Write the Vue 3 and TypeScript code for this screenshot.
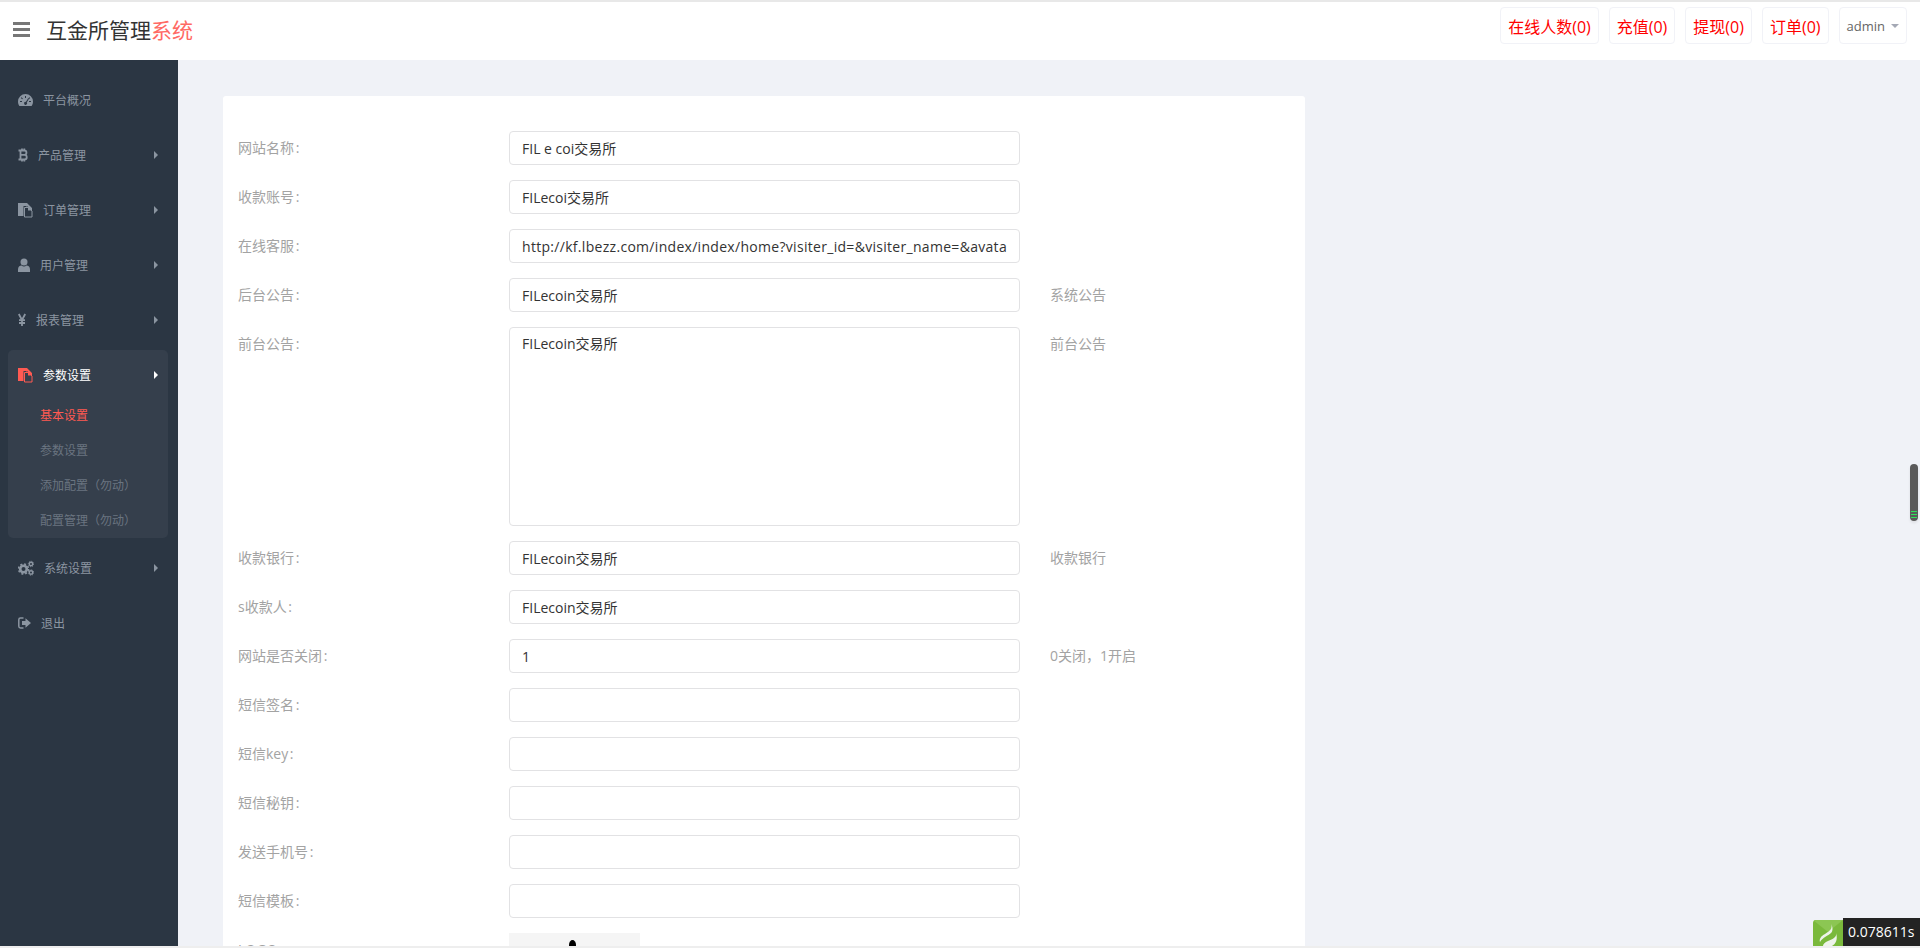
<script setup lang="ts">
interface NavItem {
  label: string;
  icon: string;
  arrow?: boolean;
  active?: boolean;
  children?: { label: string; current?: boolean }[];
}

interface FormRow {
  label: string;
  value: string;
  help?: string;
  multiline?: boolean;
  url?: boolean;
}

const navItems: NavItem[] = [
  { label: '平台概况', icon: 'dashboard' },
  { label: '产品管理', icon: 'bitcoin', arrow: true },
  { label: '订单管理', icon: 'files', arrow: true },
  { label: '用户管理', icon: 'user', arrow: true },
  { label: '报表管理', icon: 'yen', arrow: true },
  {
    label: '参数设置',
    icon: 'files',
    arrow: true,
    active: true,
    children: [
      { label: '基本设置', current: true },
      { label: '参数设置' },
      { label: '添加配置（勿动）' },
      { label: '配置管理（勿动）' },
    ],
  },
  { label: '系统设置', icon: 'gears', arrow: true },
  { label: '退出', icon: 'signout' },
];

const iconWidth: Record<string, number> = {
  dashboard: 15,
  bitcoin: 10,
  files: 15,
  user: 12,
  yen: 8,
  gears: 16,
  signout: 13,
};

const formRows: FormRow[] = [
  { label: '网站名称', value: 'FIL e coi交易所' },
  { label: '收款账号', value: 'FILecoi交易所' },
  { label: '在线客服', value: 'http://kf.lbezz.com/index/index/home?visiter_id=&visiter_name=&avatar=&business_id=1', url: true },
  { label: '后台公告', value: 'FILecoin交易所', help: '系统公告' },
  { label: '前台公告', value: 'FILecoin交易所', help: '前台公告', multiline: true },
  { label: '收款银行', value: 'FILecoin交易所', help: '收款银行' },
  { label: 's收款人', value: 'FILecoin交易所' },
  { label: '网站是否关闭', value: '1', help: '0关闭，1开启' },
  { label: '短信签名', value: '' },
  { label: '短信key', value: '' },
  { label: '短信秘钥', value: '' },
  { label: '发送手机号', value: '' },
  { label: '短信模板', value: '' },
];

const counters = ['在线人数(0)', '充值(0)', '提现(0)', '订单(0)'];
</script>

<template>
  <div class="page">
    <header class="topbar">
      <div class="brand">
        <span class="burger"><i></i><i></i><i></i></span>
        <span class="brand-name">互金所管理<em>系统</em></span>
      </div>
      <div class="top-actions">
        <a v-for="c in counters" :key="c" class="counter">{{ c }}</a>
        <a class="user-btn">admin<span class="caret"></span></a>
      </div>
    </header>

    <div class="body">
      <aside class="sidebar">
        <div
          v-for="item in navItems"
          :key="item.label + item.icon"
          class="nav-group"
          :class="{ active: item.active }"
        >
          <div class="nav-item">
            <svg
              class="nav-icon"
              :style="{ width: iconWidth[item.icon] + 'px' }"
              :viewBox="`0 0 ${iconWidth[item.icon]} 16`"
              fill="currentColor"
            >
              <template v-if="item.icon === 'dashboard'">
                <path
                  fill-rule="evenodd"
                  d="M7.5 2A7.5 7.5 0 0 0 0 9.5c0 1.700.5 3.200 1.400 4.500h12.200c.9-1.300 1.400-2.800 1.400-4.500A7.500 7.500 0 0 0 7.500 2zM7 4h1v2H7zM3.500 5.200l1.400 1.400-.7.7-1.400-1.400zM11.500 5.200l.7.7-1.400 1.400-.7-.7zM2 9h2v1H2zM11 9h2v1h-2zM10 6.500l.8.5L8.800 10.500a1.500 1.500 0 1 1-1-.6z"
                />
              </template>
              <template v-else-if="item.icon === 'bitcoin'">
                <path
                  d="M2.500 3.500h3.700c3 0 3 4.300 0 4.300H2.500m3.700 0c3.400 0 3.400 4.700 0 4.700H2.500M2.500 3.500v9M.5 3.500h2M.5 12.500h2M4 1.500v2M6.300 1.500v2M4 12.500v2M6.300 12.500v2"
                  fill="none"
                  stroke="currentColor"
                  stroke-width="1.800"
                />
              </template>
              <template v-else-if="item.icon === 'files'">
                <path d="M0 1h8v3H5.500v10H0z" />
                <path d="M6.500 5.500h4l3.500 3.500v6H6.500z" fill="none" stroke="currentColor" stroke-width="1" />
                <path d="M8 1h1l5 5v2.500h-4V4.500H8z" />
              </template>
              <template v-else-if="item.icon === 'user'">
                <circle cx="6" cy="5" r="3.500" />
                <path d="M0 15v-2.500C0 10 1.500 8.500 3.500 8.500c.8.600 1.600.9 2.500.9s1.700-.3 2.500-.9c2 0 3.500 1.500 3.500 4V15z" />
              </template>
              <template v-else-if="item.icon === 'yen'">
                <path
                  d="M.8 2l3.200 6 3.200-6M4 8v6M1 8.200h6M1 11h6"
                  fill="none"
                  stroke="currentColor"
                  stroke-width="1.800"
                />
              </template>
              <template v-else-if="item.icon === 'gears'">
                <circle cx="5.500" cy="9" r="3.300" fill="none" stroke="currentColor" stroke-width="2.600" />
                <circle cx="5.500" cy="9" r="5" fill="none" stroke="currentColor" stroke-width="1.500" stroke-dasharray="2 1.930" />
                <circle cx="13" cy="4" r="1.700" fill="none" stroke="currentColor" stroke-width="1.400" />
                <circle cx="13" cy="4" r="2.700" fill="none" stroke="currentColor" stroke-width="1" stroke-dasharray="1.100 1.020" />
                <circle cx="13" cy="12.500" r="1.700" fill="none" stroke="currentColor" stroke-width="1.400" />
                <circle cx="13" cy="12.500" r="2.700" fill="none" stroke="currentColor" stroke-width="1" stroke-dasharray="1.100 1.020" />
              </template>
              <template v-else>
                <path d="M5.500 3H2.500C1.400 3 .8 3.700.8 4.700v6.600c0 1 .6 1.700 1.700 1.700h3" fill="none" stroke="currentColor" stroke-width="1.500" />
                <path d="M7.500 3.200L13 8l-5.500 4.800V10H4V6h3.500z" />
              </template>
            </svg>
            <span class="nav-label">{{ item.label }}</span>
            <span v-if="item.arrow" class="nav-arrow"></span>
          </div>
          <div v-if="item.children" class="sub-list">
            <div
              v-for="sub in item.children"
              :key="sub.label"
              class="sub-item"
              :class="{ current: sub.current }"
            >
              {{ sub.label }}
            </div>
          </div>
        </div>
      </aside>

      <main class="main">
        <section class="card">
          <div v-for="row in formRows" :key="row.label" class="form-row">
            <label class="form-label">{{ row.label }} :</label>
            <textarea v-if="row.multiline" class="field area" :value="row.value"></textarea>
            <input v-else class="field" :class="{ url: row.url }" type="text" :value="row.value" />
            <span v-if="row.help" class="help">{{ row.help }}</span>
          </div>
          <div class="form-row">
            <label class="form-label">LOGO :</label>
            <div class="logo-box"><span class="logo-mark"></span></div>
          </div>
        </section>
      </main>
    </div>

    <div class="bottom-line"></div>

    <div class="scroll-widget">
      <i></i><i></i><i></i>
    </div>
    <div class="trace-badge">
      <svg class="trace-logo" viewBox="0 0 30 26">
        <rect width="30" height="26" fill="#7ab93c" />
        <path d="M0 0l15 12L30 0z" fill="#8cc653" />
        <path d="M18 4c2 4-1 7-6 10-4 2-6 5-5 8 3-5 8-6 11-9 2-2 2-6 0-9z" fill="#eef3ea" />
        <path d="M23 13c1 4-3 6-8 8-3 1-5 3-5 5h9c4-2 6-7 4-13z" fill="#eef3ea" />
      </svg>
      <span class="trace-time">0.078611s</span>
    </div>
  </div>
</template>

<style>
html,
body {
  margin: 0;
  padding: 0;
  background: #f0f2f7;
  overflow: hidden;
}
</style>

<style scoped>
.page {
  position: relative;
  display: flex;
  flex-direction: column;
  height: 948px;
  overflow: hidden;
  font-family: 'Open Sans', 'Noto Sans CJK SC', sans-serif;
  font-size: 14px;
  color: #333;
}

.topbar {
  flex: none;
  height: 60px;
  box-sizing: border-box;
  border-top: 2px solid #e8e8e8;
  background: #fff;
  display: flex;
  align-items: flex-start;
  justify-content: space-between;
}

.brand {
  display: flex;
  align-items: center;
  height: 55px;
  padding-left: 13px;
}

.burger {
  display: flex;
  flex-direction: column;
  gap: 3px;
  width: 17px;
  margin-right: 16px;
}

.burger i {
  display: block;
  height: 3px;
  background: #777;
}

.brand-name {
  font-size: 21px;
  line-height: 30px;
  color: #333;
}

.brand-name em {
  font-style: normal;
  color: #ff6a64;
}

.top-actions {
  display: flex;
  gap: 10px;
  padding: 5px 13px 0 0;
}

.counter,
.user-btn {
  display: flex;
  align-items: center;
  height: 37px;
  box-sizing: border-box;
  padding: 0 7px;
  border: 1px solid #f1f2f7;
  border-radius: 4px;
  font-size: 16px;
  color: #f00;
}

.user-btn {
  font-size: 13px;
  color: #666;
}

.caret {
  width: 0;
  height: 0;
  margin-left: 6px;
  border-left: 4px solid transparent;
  border-right: 4px solid transparent;
  border-top: 4px solid #a5a9b5;
}

.body {
  flex: 1;
  min-height: 0;
  display: flex;
}

.sidebar {
  flex: none;
  width: 178px;
  background: #2b3643;
  padding-top: 12px;
  box-sizing: border-box;
}

.nav-group {
  padding: 0 10px 0 8px;
  color: #8b95a1;
}

.nav-item {
  position: relative;
  display: flex;
  align-items: center;
  gap: 10px;
  height: 55px;
  box-sizing: border-box;
  padding-left: 10px;
  font-size: 12px;
}

.nav-icon {
  flex: none;
  height: 16px;
  color: #8b95a1;
}

.nav-label {
  color: #8b95a1;
}

.nav-arrow {
  position: absolute;
  left: 146px;
  top: 24px;
  width: 0;
  height: 0;
  border-top: 4px solid transparent;
  border-bottom: 4px solid transparent;
  border-left: 4px solid #8b95a1;
}

.nav-group.active {
  margin: 3px 10px 2px 8px;
  padding: 0;
  background: #353f4c;
  border-radius: 5px;
}

.nav-group.active .nav-item {
  height: 48px;
  padding-top: 2px;
}

.nav-group.active .nav-icon {
  color: #ff5a52;
}

.nav-group.active .nav-label {
  color: #fff;
}

.nav-group.active .nav-arrow {
  border-left-color: #fff;
  top: 21px;
}

.sub-item {
  height: 35px;
  line-height: 35px;
  padding-left: 32px;
  font-size: 12px;
  color: #6a7480;
}

.sub-item.current {
  color: #ff5a52;
}

.main {
  flex: 1;
  min-width: 0;
  padding: 36px 45px 0;
  overflow: hidden;
}

.card {
  width: 1082px;
  box-sizing: border-box;
  padding: 35px 15px 20px;
  background: #fff;
  border-radius: 3px 3px 0 0;
}

.form-row {
  display: flex;
  align-items: flex-start;
  margin-bottom: 15px;
}

.form-label {
  flex: none;
  width: 271px;
  height: 34px;
  line-height: 34px;
  font-size: 14px;
  word-spacing: -2px;
  color: #a3a3a3;
}

.field {
  flex: none;
  display: block;
  width: 511px;
  height: 34px;
  box-sizing: border-box;
  margin: 0;
  padding: 0 12px;
  border: 1px solid #e2e2e4;
  border-radius: 4px;
  outline: none;
  background: #fff;
  font-family: inherit;
  font-size: 14px;
  color: #333;
}

.field.url {
  letter-spacing: 0.3px;
}

.area {
  height: 199px;
  padding: 6px 12px;
  line-height: 20px;
  resize: none;
}

.help {
  margin-left: 30px;
  line-height: 34px;
  font-size: 14px;
  color: #a3a3a3;
}

.logo-box {
  position: relative;
  width: 131px;
  height: 60px;
  background: #f5f5f5;
}

.logo-mark {
  position: absolute;
  left: 60px;
  top: 7px;
  width: 7px;
  height: 10px;
  border-radius: 50%;
  background: #000;
}

.bottom-line {
  flex: none;
  height: 2px;
  background: #eee;
}

.scroll-widget {
  position: absolute;
  left: 1910px;
  top: 464px;
  width: 8px;
  height: 57px;
  box-sizing: border-box;
  padding-top: 47px;
  border-radius: 4px;
  background: #5a5a5a;
  box-shadow: 0 2px 3px rgba(0, 0, 0, 0.08);
}

.scroll-widget i {
  display: block;
  height: 1px;
  margin: 0 1px 2px;
  background: #2fe05a;
}

.trace-badge {
  position: absolute;
  right: 0;
  bottom: 2px;
  display: flex;
  align-items: flex-end;
}

.trace-logo {
  display: block;
  width: 30px;
  height: 26px;
  border-radius: 3px 0 0 0;
}

.trace-time {
  width: 77px;
  height: 28px;
  box-sizing: border-box;
  padding-left: 5px;
  background: #232323;
  font-size: 14px;
  line-height: 28px;
  color: #fff;
}
</style>
